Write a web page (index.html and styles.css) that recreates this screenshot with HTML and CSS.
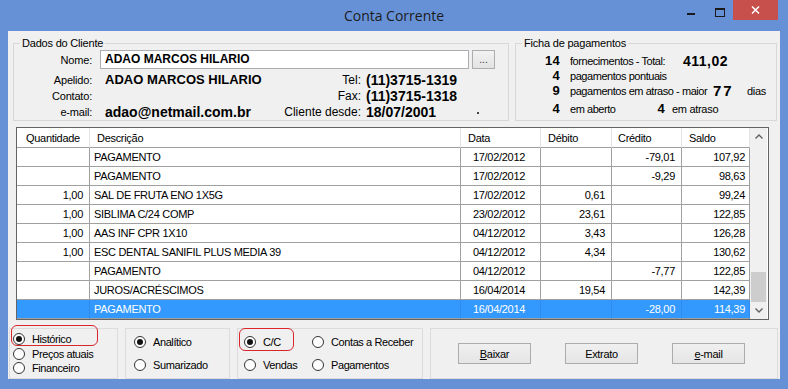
FILE: index.html
```html
<!DOCTYPE html>
<html lang="pt-BR">
<head>
    <meta charset="UTF-8">
    <meta name="viewport" content="width=device-width, initial-scale=1.0">
    <title>Conta Corrente</title>
    <link rel="stylesheet" href="styles.css">
</head>
<body>
<div class="window">

    <!-- Barra de titulo -->
    <div class="titlebar">
        <span class="title">Conta Corrente</span>
        <div class="controls">
            <span class="ctl-min"></span>
            <span class="ctl-max"></span>
            <span class="ctl-close">
                <svg width="9" height="8" viewBox="0 0 9 8"><path d="M1 0.5 L8 7.5 M8 0.5 L1 7.5" stroke="#fff" stroke-width="1.5"/></svg>
            </span>
        </div>
    </div>

    <div class="client">

        <div class="top">
            <!-- Dados do cliente -->
            <fieldset class="group dados">
                <legend>Dados do Cliente</legend>
                <div class="nome-row">
                    <span class="lbl">Nome:</span>
                    <div class="input">ADAO MARCOS HILARIO</div>
                    <button class="dots">...</button>
                </div>
                <div class="info">
                    <span class="lbl">Apelido:</span>
                    <span class="val apelido">ADAO MARCOS HILARIO</span>
                    <span class="lbl2">Tel:</span>
                    <span class="val r">(11)3715-1319</span>

                    <span class="lbl">Contato:</span>
                    <span class="val"></span>
                    <span class="lbl2">Fax:</span>
                    <span class="val r">(11)3715-1318</span>

                    <span class="lbl">e-mail:</span>
                    <span class="val email">adao@netmail.com.br</span>
                    <span class="lbl2">Cliente desde:</span>
                    <span class="val r"><span class="desde">18/07/2001</span><span class="ponto"></span></span>
                </div>
            </fieldset>

            <!-- Ficha de pagamentos -->
            <fieldset class="group ficha">
                <legend>Ficha de pagamentos</legend>
                <div class="ficha-body">
                    <div class="frow">
                        <span class="n">14</span>
                        <span class="t w1">fornecimentos - Total:</span>
                        <span class="big">411,02</span>
                    </div>
                    <div class="frow">
                        <span class="n">4</span>
                        <span class="t">pagamentos pontuais</span>
                    </div>
                    <div class="frow">
                        <span class="n">9</span>
                        <span class="t w3">pagamentos em atraso - maior</span>
                        <span class="big dias">77</span>
                        <span class="t2">dias</span>
                    </div>
                    <div class="frow">
                        <span class="n">4</span>
                        <span class="t w4">em aberto</span>
                        <span class="n n2">4</span>
                        <span class="t2">em atraso</span>
                    </div>
                </div>
            </fieldset>
        </div>

        <!-- Grade de lancamentos -->
        <div class="grid">
            <table>
                <thead>
                    <tr>
                        <th class="c-qtd">Quantidade</th>
                        <th class="c-desc">Descrição</th>
                        <th class="c-data">Data</th>
                        <th class="c-deb">Débito</th>
                        <th class="c-cred">Crédito</th>
                        <th class="c-saldo">Saldo</th>
                    </tr>
                </thead>
                <tbody>
                    <tr><td class="num"></td><td>PAGAMENTO</td><td class="dt">17/02/2012</td><td class="num"></td><td class="num">-79,01</td><td class="num s">107,92</td></tr>
                    <tr><td class="num"></td><td>PAGAMENTO</td><td class="dt">17/02/2012</td><td class="num"></td><td class="num">-9,29</td><td class="num s">98,63</td></tr>
                    <tr><td class="num">1,00</td><td>SAL DE FRUTA ENO 1X5G</td><td class="dt">17/02/2012</td><td class="num">0,61</td><td class="num"></td><td class="num s">99,24</td></tr>
                    <tr><td class="num">1,00</td><td>SIBLIMA C/24 COMP</td><td class="dt">23/02/2012</td><td class="num">23,61</td><td class="num"></td><td class="num s">122,85</td></tr>
                    <tr><td class="num">1,00</td><td>AAS INF CPR 1X10</td><td class="dt">04/12/2012</td><td class="num">3,43</td><td class="num"></td><td class="num s">126,28</td></tr>
                    <tr><td class="num">1,00</td><td>ESC DENTAL SANIFIL PLUS MEDIA 39</td><td class="dt">04/12/2012</td><td class="num">4,34</td><td class="num"></td><td class="num s">130,62</td></tr>
                    <tr><td class="num"></td><td>PAGAMENTO</td><td class="dt">04/12/2012</td><td class="num"></td><td class="num">-7,77</td><td class="num s">122,85</td></tr>
                    <tr><td class="num"></td><td>JUROS/ACRÉSCIMOS</td><td class="dt">16/04/2014</td><td class="num">19,54</td><td class="num"></td><td class="num s">142,39</td></tr>
                    <tr class="sel"><td class="num"></td><td>PAGAMENTO</td><td class="dt">16/04/2014</td><td class="num"></td><td class="num">-28,00</td><td class="num s">114,39</td></tr>
                </tbody>
            </table>
            <div class="scroll">
                <div class="arrow"><svg width="8" height="5" viewBox="0 0 8 5"><path d="M0.5 4.5 L4 1 L7.5 4.5" fill="none" stroke="#606060" stroke-width="1.4"/></svg></div>
                <div class="track"><div class="thumb"></div></div>
                <div class="arrow"><svg width="8" height="5" viewBox="0 0 8 5"><path d="M0.5 0.5 L4 4 L7.5 0.5" fill="none" stroke="#606060" stroke-width="1.4"/></svg></div>
            </div>
        </div>

        <!-- Opcoes e botoes -->
        <div class="bottom">
            <div class="panel p1">
                <div class="opt"><span class="radio on"></span>Histórico</div>
                <div class="opt"><span class="radio"></span>Preços atuais</div>
                <div class="opt"><span class="radio"></span>Financeiro</div>
                <span class="mark mark1"></span>
            </div>
            <div class="panel p2">
                <div class="opt"><span class="radio on"></span>Analítico</div>
                <div class="opt"><span class="radio"></span>Sumarizado</div>
            </div>
            <div class="panel p3">
                <div class="opt"><span class="radio on"></span>C/C</div>
                <div class="opt"><span class="radio"></span>Contas a Receber</div>
                <div class="opt"><span class="radio"></span>Vendas</div>
                <div class="opt"><span class="radio"></span>Pagamentos</div>
                <span class="mark mark2"></span>
            </div>
            <div class="panel p4">
                <button class="btn"><u>B</u>aixar</button>
                <button class="btn">Extrato</button>
                <button class="btn"><u>e</u>-mail</button>
            </div>
        </div>

    </div>
</div>
</body>
</html>
```

FILE: styles.css
```css
* {
    box-sizing: border-box;
}
body {
    margin: 0;
    font-family: "Liberation Sans", Arial, sans-serif;
    font-size: 11px;
    color: #000;
    background: #fff;
    overflow: hidden;
}

/* janela */
.window {
    width: 788px;
    height: 389px;
    background: #6791d7;
    padding: 0 8px 10px 8px;
    display: flex;
    flex-direction: column;
}
.titlebar {
    height: 31px;
    margin: 0 -8px;
    display: grid;
    grid-template-columns: 1fr auto 1fr;
}
.title {
    grid-column: 2;
    align-self: center;
    font-family: "Open Sans", sans-serif;
    font-size: 14px;
    color: #1c1c1c;
    margin-top: -1px;
}
.controls {
    grid-column: 3;
    justify-self: end;
    display: flex;
    align-items: flex-start;
    margin-right: 10px;
}
.ctl-min {
    width: 8px;
    height: 2px;
    background: #1a1a1a;
    margin-top: 13px;
}
.ctl-max {
    width: 10px;
    height: 9px;
    border: 1px solid #1a1a1a;
    border-top-width: 2px;
    margin: 8px 0 0 20px;
}
.ctl-close {
    width: 45px;
    height: 20px;
    background: #c7504c;
    margin-left: 8px;
    display: flex;
    align-items: center;
    justify-content: center;
}
.client {
    flex: 1;
    background: #f0f0f0;
    display: flex;
    flex-direction: column;
}

/* grupos superiores */
.top {
    display: flex;
    gap: 6px;
    margin: 6px 3px 0 5px;
}
.group {
    margin: 0;
    padding: 0;
    border: 1px solid #d7d7d7;
    height: 84px;
    min-width: 0;
}
.group legend {
    padding: 0 2px;
    margin-left: 6px;
    line-height: 13px;
    letter-spacing: -0.2px;
}
.dados {
    width: 496px;
}
.ficha {
    flex: 1;
}
.nome-row {
    display: flex;
    align-items: center;
    height: 19px;
}
.lbl {
    width: 78px;
    text-align: right;
    letter-spacing: -0.2px;
}
.input {
    width: 369px;
    height: 19px;
    margin-left: 8px;
    background: #fff;
    border: 1px solid #abadb3;
    padding-left: 4px;
    font-weight: bold;
    font-size: 12px;
    line-height: 17px;
}
.dots {
    width: 23px;
    height: 19px;
    margin-left: 3px;
    padding: 0;
    border: 1px solid #adadad;
    background: linear-gradient(#f2f2f2, #e3e3e3);
    font: 10px "Liberation Sans", Arial, sans-serif;
    color: #333;
}
.info {
    display: grid;
    grid-template-columns: 78px 190px 79px 1fr;
    grid-auto-rows: 16px;
    align-items: center;
    margin-top: 3px;
}
.val {
    padding-left: 13px;
    font-weight: bold;
    font-size: 14px;
    line-height: 16px;
    white-space: nowrap;
}
.val.apelido {
    font-size: 13px;
}
.val.r {
    padding-left: 5px;
    display: flex;
    align-items: center;
}
.lbl2 {
    text-align: right;
    font-size: 12px;
}
.desde {
    width: 111px;
}
.ponto {
    width: 2px;
    height: 2px;
    background: #444;
    margin-top: 1px;
}

.ficha-body {
    display: grid;
    grid-template-rows: 16px 14px 16px 20px;
    padding-top: 3px;
}
.frow {
    display: flex;
    align-items: center;
    white-space: nowrap;
    line-height: 12px;
}
.n {
    width: 44px;
    text-align: right;
    font-weight: bold;
    font-size: 13px;
    letter-spacing: 0.3px;
}
.t {
    margin-left: 10px;
    letter-spacing: -0.45px;
}
.t2 {
    letter-spacing: -0.3px;
}
.w1 { width: 113px; }
.w3 { width: 143px; }
.w4 { width: 77px; }
.big {
    font-weight: bold;
    font-size: 14px;
    letter-spacing: 0.5px;
}
.big.dias {
    width: 34px;
    font-size: 15px;
    letter-spacing: 2px;
}
.n2 {
    width: 18px;
    margin-right: 7px;
}

/* grade */
.grid {
    display: flex;
    width: 753px;
    height: 193px;
    margin: 6px 0 0 8px;
    border: 1px solid #646464;
    background: #fff;
}
table {
    border-collapse: separate;
    border-spacing: 0;
    table-layout: fixed;
    width: 733px;
    letter-spacing: -0.3px;
}
th {
    height: 20px;
    padding: 0 0 0 7px;
    font-weight: normal;
    text-align: left;
    border-right: 1px solid #e5e5e5;
    border-bottom: 1px solid #a0a0a0;
}
th.c-qtd { width: 73px; padding-left: 9px; }
th.c-desc { width: 371px; }
th.c-data { width: 80px; }
th.c-deb { width: 71px; }
th.c-cred { width: 70px; padding-left: 6px; }
th.c-saldo { width: 68px; }
td {
    height: 19px;
    padding: 0 0 0 4px;
    border-right: 1px solid #a0a0a0;
    border-bottom: 1px solid #a0a0a0;
    white-space: nowrap;
    overflow: hidden;
}
td.num {
    text-align: right;
    padding: 0 6px 0 0;
}
td.s {
    padding-right: 4px;
}
td.dt {
    text-align: center;
    padding: 0 3px 0 0;
}
tr.sel td {
    background: #3399ff;
    color: #fff;
    border-right-color: #2f8cec;
}
.scroll {
    width: 17px;
    background: #f0f0f0;
    display: flex;
    flex-direction: column;
}
.arrow {
    height: 17px;
    display: flex;
    align-items: center;
    justify-content: center;
}
.track {
    flex: 1;
    display: flex;
    flex-direction: column;
    justify-content: flex-end;
}
.thumb {
    height: 30px;
    margin: 0 1px;
    background: #cdcdcd;
}

/* opcoes inferiores */
.bottom {
    display: flex;
    gap: 7px;
    height: 51px;
    margin: 8px 2px 0 1px;
}
.panel {
    position: relative;
    border: 1px solid #dcdcdc;
}
.p1 {
    width: 109px;
    padding: 3px 0 0 3px;
}
.p1 .opt {
    height: 14.5px;
}
.p2 {
    width: 105px;
    padding: 5px 0 0 8px;
}
.p2 .opt {
    height: 16px;
    margin-bottom: 7px;
}
.p3 {
    width: 186px;
    padding: 5px 0 0 6px;
    display: grid;
    grid-template-columns: 68px auto;
    grid-template-rows: 16px 16px;
    row-gap: 7px;
    align-content: start;
}
.p4 {
    flex: 1;
    padding: 14px 0 0 27px;
    display: flex;
    gap: 34px;
    align-items: flex-start;
}
.opt {
    display: flex;
    align-items: center;
    gap: 7px;
    white-space: nowrap;
    letter-spacing: -0.4px;
}
.radio {
    flex: none;
    width: 12px;
    height: 12px;
    border: 1px solid #333;
    border-radius: 50%;
    background: #fff;
    display: flex;
    align-items: center;
    justify-content: center;
}
.radio.on::after {
    content: "";
    width: 6px;
    height: 6px;
    border-radius: 50%;
    background: #111;
}
.mark {
    position: absolute;
    border: 1px solid #d8262c;
    border-radius: 6px;
}
.mark1 {
    left: 1px;
    top: -4px;
    width: 87px;
    height: 21px;
}
.mark2 {
    left: 1px;
    top: -1px;
    width: 55px;
    height: 23px;
}
.btn {
    width: 73px;
    height: 21px;
    padding: 0;
    border: 1px solid #acacac;
    background: linear-gradient(#f0f0f0, #e5e5e5);
    font: 11px "Liberation Sans", Arial, sans-serif;
    letter-spacing: -0.3px;
    color: #000;
}
```
